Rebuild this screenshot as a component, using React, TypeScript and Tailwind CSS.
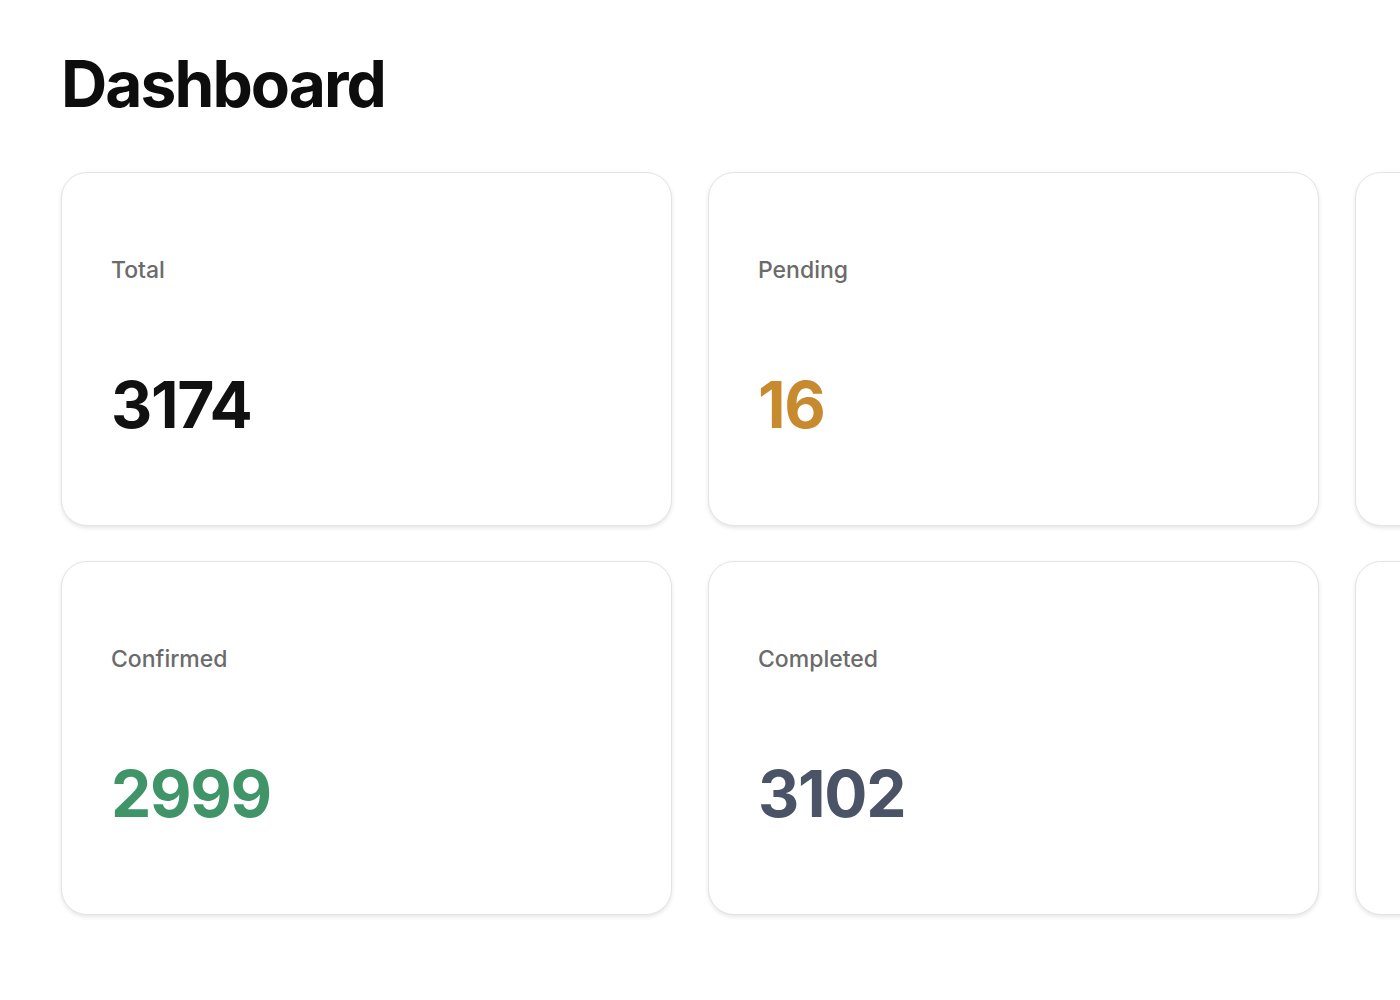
import React from "react";

type Stat = { label: string; value: string; color: string };

const rows: Stat[][] = [
  [
    { label: "Total", value: "3174", color: "text-[#111111]" },
    { label: "Pending", value: "16", color: "text-[#c78a2f]" },
  ],
  [
    { label: "Confirmed", value: "2999", color: "text-[#3f9468]" },
    { label: "Completed", value: "3102", color: "text-[#4a5466]" },
  ],
];

const card =
  "h-[354px] rounded-[26px] border border-[#e4e4e4] bg-white shadow-[0_2px_4px_rgba(0,0,0,0.1)] px-[49px] flex flex-col justify-center";

function StatCard({ label, value, color }: Stat) {
  return (
    <div className={card}>
      <div className="-mt-[6px] text-[23px] leading-[28px] font-medium text-[#6b6b6b]">{label}</div>
      <div className={`mt-[89px] text-[64px] leading-none font-bold tracking-[-0.02em] ${color}`}>{value}</div>
    </div>
  );
}

export default function App() {
  return (
    <div className="min-h-screen w-full overflow-hidden bg-white font-['Inter',sans-serif]">
      <div className="pl-[61px] pt-[46px]">
        <h1 className="text-[64px] leading-[76px] font-bold tracking-[-0.03em] text-[#0d0d0d]">Dashboard</h1>
        <div className="mt-[50px] grid grid-cols-[611px_611px_611px] gap-x-[36px] gap-y-[35px] w-max">
          {rows.map((row, i) => (
            <React.Fragment key={i}>
              {row.map((s) => (
                <StatCard key={s.label} {...s} />
              ))}
              {/* third column runs past the viewport edge */}
              <div className={card} />
            </React.Fragment>
          ))}
        </div>
      </div>
    </div>
  );
}
